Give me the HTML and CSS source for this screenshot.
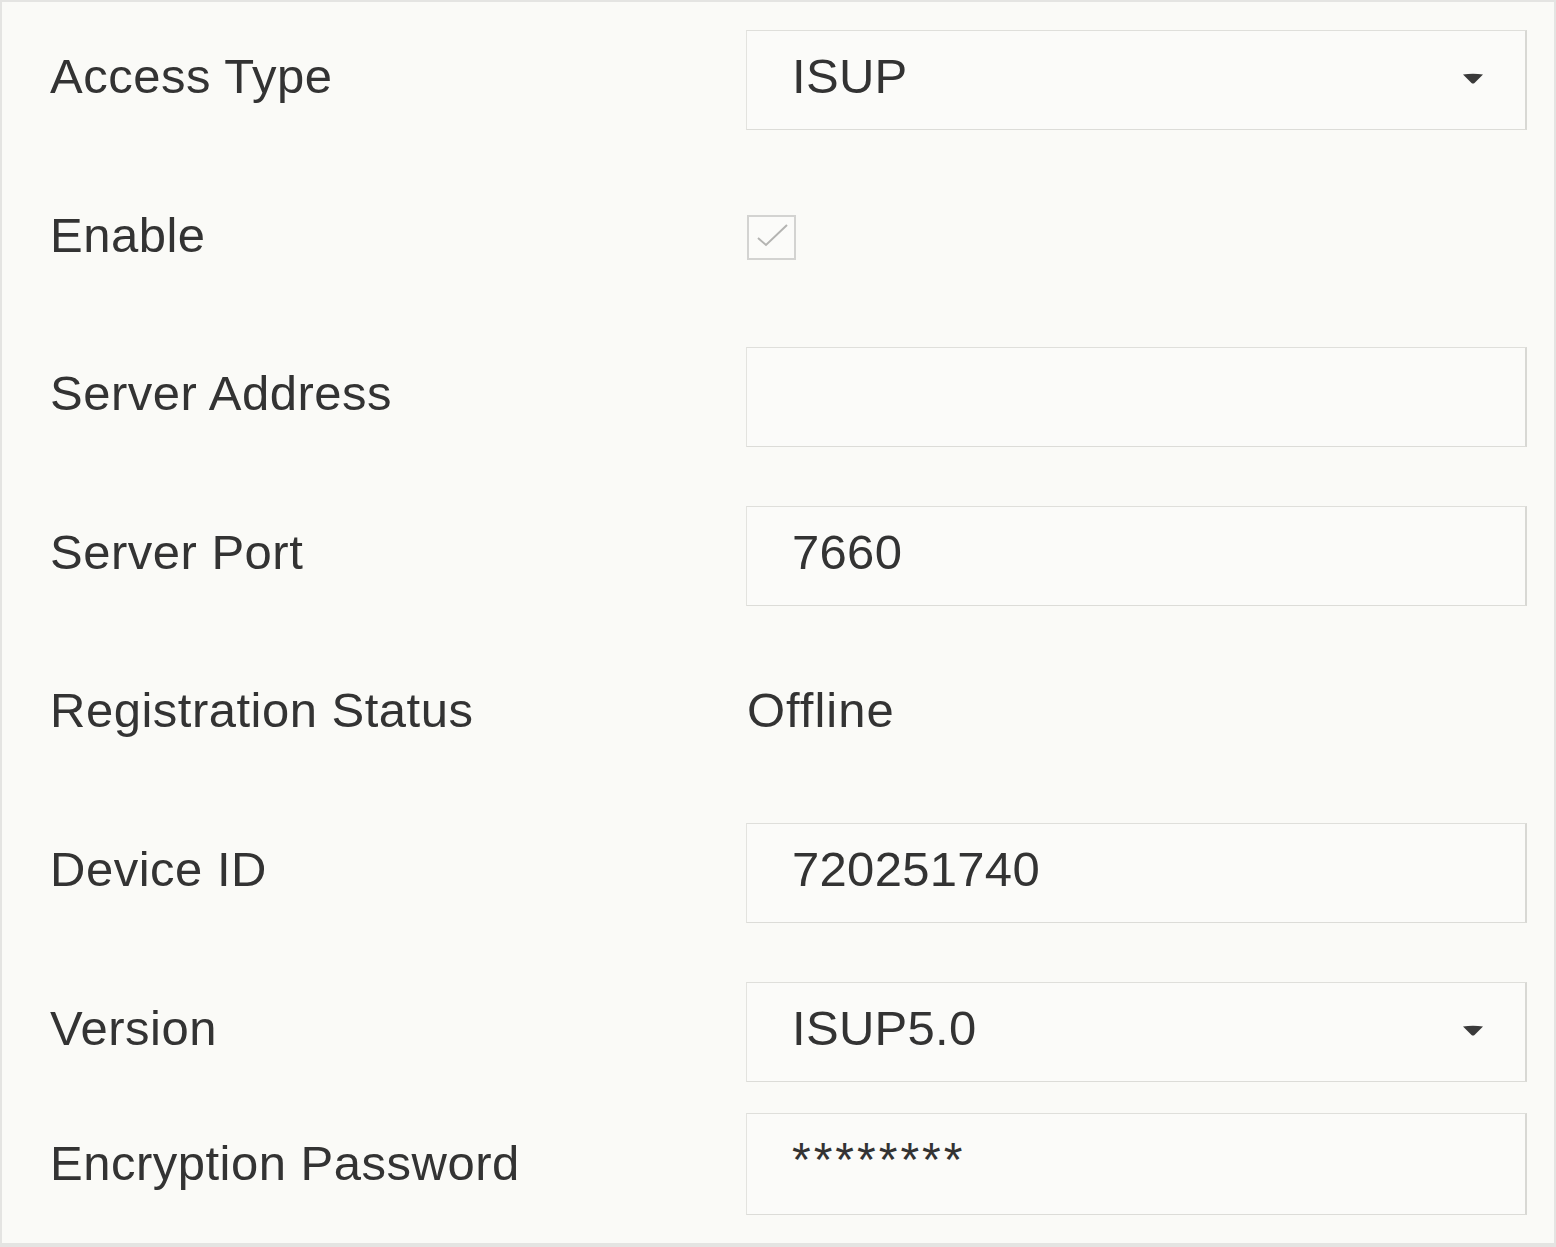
FILE: index.html
```html
<!DOCTYPE html>
<html lang="en">
<head>
<meta charset="utf-8">
<title>Platform Access</title>
<link rel="stylesheet" href="styles.css">
</head>
<body>
<div class="panel">
  <div class="form">
    <div class="label">Access Type</div>
    <div class="field select">
      <span class="value">ISUP</span>
      <svg class="caret" width="22" height="11" viewBox="0 0 22 11"><path d="M1 1.5 Q11 0 21 1.5 L12.5 10 Q11 11 9.5 10 Z" fill="#3a3a3a"/></svg>
    </div>

    <div class="label">Enable</div>
    <div class="check-cell">
      <span class="checkbox">
        <svg width="48" height="45" viewBox="0 0 48 45"><path d="M10 23 L18 30 L39 10" fill="none" stroke="#b4b4b2" stroke-width="2"/></svg>
      </span>
    </div>

    <div class="label">Server Address</div>
    <div class="field"></div>

    <div class="label">Server Port</div>
    <div class="field"><span class="value">7660</span></div>

    <div class="label">Registration Status</div>
    <div class="plain">Offline</div>

    <div class="label">Device ID</div>
    <div class="field"><span class="value">720251740</span></div>

    <div class="label">Version</div>
    <div class="field select">
      <span class="value">ISUP5.0</span>
      <svg class="caret" width="22" height="11" viewBox="0 0 22 11"><path d="M1 1.5 Q11 0 21 1.5 L12.5 10 Q11 11 9.5 10 Z" fill="#3a3a3a"/></svg>
    </div>

    <div class="label last">Encryption Password</div>
    <div class="field last password"><span class="value">********</span></div>
  </div>
</div>
</body>
</html>
```

FILE: styles.css
```css
html, body {
  margin: 0;
  padding: 0;
  background: #fafaf7;
}

.panel {
  box-sizing: border-box;
  width: 1556px;
  height: 1247px;
  border: 2px solid #e4e4e2;
  border-bottom-width: 4px;
  background: #fafaf7;
  padding: 28px 0 0 48px;
  font-family: "Liberation Sans", Arial, sans-serif;
  font-size: 49px;
  font-variant-ligatures: none;
  color: #333333;
}

.form {
  display: grid;
  grid-template-columns: 696px 781px;
  grid-auto-rows: 100px;
  row-gap: 58.6px;
}

.label {
  line-height: 92px;
  white-space: nowrap;
  letter-spacing: 0.5px;
}

.field {
  box-sizing: border-box;
  height: 100px;
  border: 1px solid #e3e3df;
  border-top-color: #dfdfdb;
  border-bottom-color: #dcdcd8;
  border-right: 2px solid #d8d8d4;
  background: #fbfbf9;
  display: flex;
  align-items: flex-start;
  justify-content: space-between;
  padding: 0 41px 0 45px;
}

.value {
  line-height: 90px;
  white-space: nowrap;
  letter-spacing: 0.3px;
}

.caret {
  margin-top: 42px;
}

.password .value {
  letter-spacing: 3px;
  font-size: 48px;
  line-height: 90px;
  position: relative;
  top: 1px;
}

.check-cell {
  display: flex;
  align-items: flex-start;
  padding: 26px 0 0 1px;
}

.checkbox {
  box-sizing: border-box;
  width: 49px;
  height: 45px;
  border: 2px solid #d3d3d1;
  background: #fbfbf9;
  display: flex;
  align-items: center;
  justify-content: center;
}

.checkbox svg {
  flex: none;
}

.plain {
  line-height: 92px;
  padding-left: 1px;
  letter-spacing: 1px;
}

.label.last {
  margin-top: -27px;
  line-height: 100px;
}

.field.last {
  margin-top: -27px;
  height: 102px;
}
```
